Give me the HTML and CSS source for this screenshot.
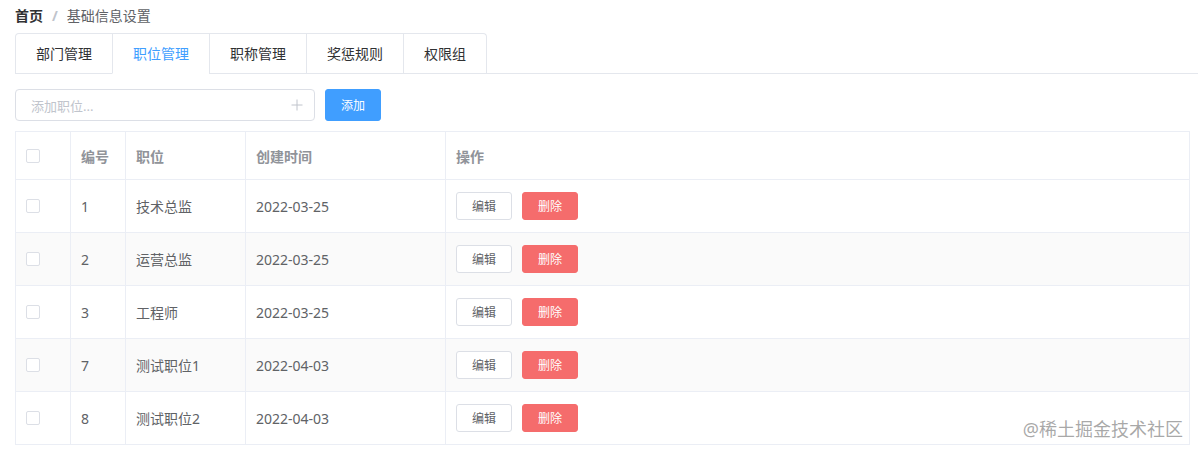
FILE: index.html
```html
<!DOCTYPE html>
<html lang="zh-CN">
<head>
<meta charset="utf-8">
<title>基础信息设置</title>
<link rel="stylesheet" href="styles.css">
</head>
<body>
<div class="page">
  <div class="breadcrumb">
    <span class="crumb crumb-home">首页</span>
    <span class="crumb-sep">/</span>
    <span class="crumb">基础信息设置</span>
  </div>

  <div class="tabs-header">
    <div class="tabs-nav">
      <div class="tab">部门管理</div>
      <div class="tab tab-active">职位管理</div>
      <div class="tab">职称管理</div>
      <div class="tab">奖惩规则</div>
      <div class="tab">权限组</div>
    </div>
  </div>

  <div class="toolbar">
    <div class="input">
      <span class="input-placeholder">添加职位...</span>
      <svg class="input-plus" width="12" height="12" viewBox="0 0 12 12"><path d="M6 0.5V11.5M0.5 6H11.5" stroke="#C0C4CC" stroke-width="1" fill="none"/></svg>
    </div>
    <button class="btn btn-primary">添加</button>
  </div>

  <div class="table">
    <div class="row row-head">
      <div class="cell c-check"><span class="checkbox"></span></div>
      <div class="cell c-id">编号</div>
      <div class="cell c-name">职位</div>
      <div class="cell c-date">创建时间</div>
      <div class="cell c-op">操作</div>
    </div>
    <div class="row">
      <div class="cell c-check"><span class="checkbox"></span></div>
      <div class="cell c-id">1</div>
      <div class="cell c-name">技术总监</div>
      <div class="cell c-date">2022-03-25</div>
      <div class="cell c-op"><button class="btn btn-small">编辑</button><button class="btn btn-small btn-danger">删除</button></div>
    </div>
    <div class="row row-striped">
      <div class="cell c-check"><span class="checkbox"></span></div>
      <div class="cell c-id">2</div>
      <div class="cell c-name">运营总监</div>
      <div class="cell c-date">2022-03-25</div>
      <div class="cell c-op"><button class="btn btn-small">编辑</button><button class="btn btn-small btn-danger">删除</button></div>
    </div>
    <div class="row">
      <div class="cell c-check"><span class="checkbox"></span></div>
      <div class="cell c-id">3</div>
      <div class="cell c-name">工程师</div>
      <div class="cell c-date">2022-03-25</div>
      <div class="cell c-op"><button class="btn btn-small">编辑</button><button class="btn btn-small btn-danger">删除</button></div>
    </div>
    <div class="row row-striped">
      <div class="cell c-check"><span class="checkbox"></span></div>
      <div class="cell c-id">7</div>
      <div class="cell c-name">测试职位1</div>
      <div class="cell c-date">2022-04-03</div>
      <div class="cell c-op"><button class="btn btn-small">编辑</button><button class="btn btn-small btn-danger">删除</button></div>
    </div>
    <div class="row">
      <div class="cell c-check"><span class="checkbox"></span></div>
      <div class="cell c-id">8</div>
      <div class="cell c-name">测试职位2</div>
      <div class="cell c-date">2022-04-03</div>
      <div class="cell c-op"><button class="btn btn-small">编辑</button><button class="btn btn-small btn-danger">删除</button></div>
    </div>
  </div>
</div>
<div class="watermark">@稀土掘金技术社区</div>
</body>
</html>
```

FILE: styles.css
```css
* { box-sizing: border-box; }
html, body { margin: 0; padding: 0; background: #fff; }
body {
  font-family: "Noto Sans", "Noto Sans CJK SC", sans-serif;
  font-size: 14px;
  color: #606266;
  overflow: hidden;
  position: relative;
  height: 453px;
}
.page { padding: 9px 8px 0 15px; }

.breadcrumb { display: flex; align-items: center; height: 14px; line-height: 14px; margin-bottom: 10px; font-size: 14px; }
.crumb { color: #606266; }
.crumb-home { color: #303133; font-weight: bold; }
.crumb-sep { margin: 0 9px; color: #C0C4CC; font-weight: bold; }

.tabs-header { border-bottom: 1px solid #E4E7ED; margin-right: -8px; margin-bottom: 15px; display: flex; }
.tabs-nav { display: flex; border: 1px solid #E4E7ED; border-bottom: none; border-radius: 4px 4px 0 0; margin-bottom: -1px; }
.tab { height: 40px; line-height: 40px; padding: 0 20px; color: #303133; font-size: 14px; border-left: 1px solid #E4E7ED; border-bottom: 1px solid transparent; }
.tab:first-child { border-left: none; }
.tab-active { color: #409EFF; border-bottom-color: #fff; }

.toolbar { display: flex; align-items: center; gap: 10px; margin-bottom: 10px; }
.input { width: 300px; height: 32px; border: 1px solid #DCDFE6; border-radius: 4px; display: flex; align-items: center; justify-content: space-between; padding: 0 10px 0 15px; background: #fff; }
.input-placeholder { color: #C0C4CC; font-size: 13px; }
.input-plus { display: block; margin-right: 1px; }

.btn { font-family: inherit; border-radius: 3px; cursor: pointer; font-size: 12px; }
.btn-primary { width: 56px; height: 32px; border: 1px solid #409EFF; background: #409EFF; color: #fff; padding: 0; }
.btn-small { width: 56px; height: 28px; padding: 0; border: 1px solid #DCDFE6; background: #fff; color: #606266; }
.btn-danger { background: #F56C6C; border-color: #F56C6C; color: #fff; margin-left: 10px; }

.table { width: 1175px; border: 1px solid #EBEEF5; border-bottom: none; }
.row { display: flex; height: 53px; border-bottom: 1px solid #EBEEF5; background: #fff; }
.row-head { height: 48px; }
.row-striped { background: #FAFAFA; }
.cell { display: flex; align-items: center; padding: 0 10px; border-right: 1px solid #EBEEF5; color: #606266; font-size: 14px; }
.row-head .cell { color: #909399; font-weight: bold; }
.c-check { width: 55px; }
.c-id { width: 55px; }
.c-name { width: 120px; }
.c-date { width: 200px; }
.c-op { flex: 1; border-right: none; }
.checkbox { width: 14px; height: 14px; border: 1px solid #DCDFE6; border-radius: 2px; background: #fff; display: block; }

.watermark { position: absolute; right: 15px; bottom: 12px; font-size: 18px; color: rgba(140, 140, 140, 0.75); letter-spacing: 0; }
```
